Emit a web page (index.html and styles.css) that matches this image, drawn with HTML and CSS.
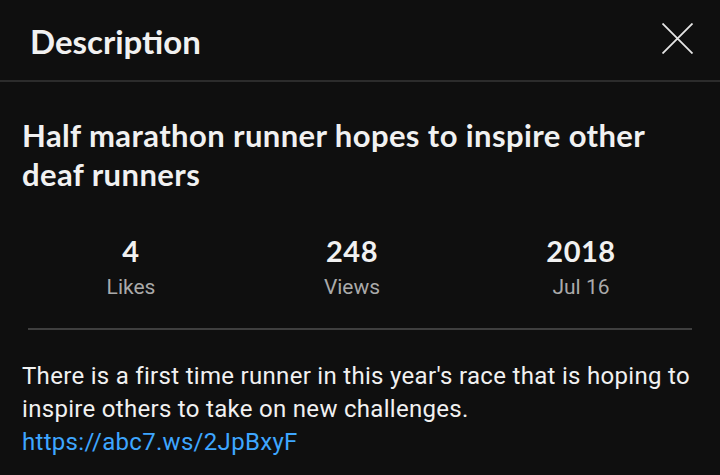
FILE: index.html
```html
<!DOCTYPE html>
<html>
<head>
<meta charset="utf-8">
<link rel="stylesheet" href="styles.css">
</head>
<body>
<div class="panel">
  <header class="header">
    <h1 class="header-title">Description</h1>
    <button class="close" aria-label="Close">
      <svg width="31" height="31" viewBox="0 0 31 31"><path d="M0.5 0.5L30.5 30.5M30.5 0.5L0.5 30.5" stroke="#e6e6e6" stroke-width="1.8" fill="none"/></svg>
    </button>
  </header>
  <section class="content">
    <h2 class="video-title">Half marathon runner hopes to inspire other deaf runners</h2>
    <div class="stats">
      <div class="stat"><div class="stat-value">4</div><div class="stat-label">Likes</div></div>
      <div class="stat"><div class="stat-value">248</div><div class="stat-label">Views</div></div>
      <div class="stat"><div class="stat-value">2018</div><div class="stat-label">Jul 16</div></div>
    </div>
    <div class="divider"></div>
    <p class="desc">There is a first time runner in this year's race that is hoping to inspire others to take on new challenges.<br><a class="link" href="#">https://abc7.ws/2JpBxyF</a></p>
  </section>
</div>
</body>
</html>
```
FILE: styles.css
```css
html, body {
  margin: 0;
  padding: 0;
  background: #0f0f0f;
}
body {
  width: 720px;
  height: 475px;
  overflow: hidden;
  font-family: Roboto, "Liberation Sans", sans-serif;
  color: #f1f1f1;
}
.header {
  height: 82px;
  border-bottom: 2px solid #2c2c2c;
  box-sizing: border-box;
  display: flex;
  align-items: center;
  justify-content: space-between;
  padding: 0 27px 0 30px;
}
.header-title {
  margin: 2px 0 0;
  font-family: Lato, "Noto Sans", sans-serif;
  font-weight: 700;
  font-size: 33px;
  line-height: 40px;
  color: #f1f1f1;
}
.close {
  background: none;
  border: 0;
  padding: 0;
  width: 31px;
  height: 31px;
  display: block;
  margin-top: -4px;
}
.close svg { display: block; }
.content {
  padding: 0 22px;
}
.video-title {
  margin: 34px 0 0;
  font-family: Lato, "Noto Sans", sans-serif;
  font-weight: 700;
  font-size: 31px;
  line-height: 39px;
  letter-spacing: 0.4px;
  color: #f1f1f1;
  padding-right: 10px;
}
.stats {
  display: grid;
  grid-template-columns: 218px 224px 1fr;
  margin-top: 40px;
}
.stat {
  display: flex;
  flex-direction: column;
  align-items: center;
}
.stat-value {
  font-family: Lato, "Noto Sans", sans-serif;
  font-weight: 700;
  font-size: 29px;
  line-height: 34px;
  letter-spacing: 0.5px;
  color: #f1f1f1;
}
.stat-label {
  font-size: 21px;
  line-height: 28px;
  color: #aaaaaa;
  margin-top: 5px;
}
.divider {
  margin: 27px 6px 0 6px;
  height: 2px;
  background: #3f3f3f;
}
.desc {
  margin: 30px 0 0;
  font-size: 24px;
  line-height: 33px;
  letter-spacing: 0.3px;
  color: #f1f1f1;
}
.link {
  color: #3ea6ff;
  text-decoration: none;
}
```
